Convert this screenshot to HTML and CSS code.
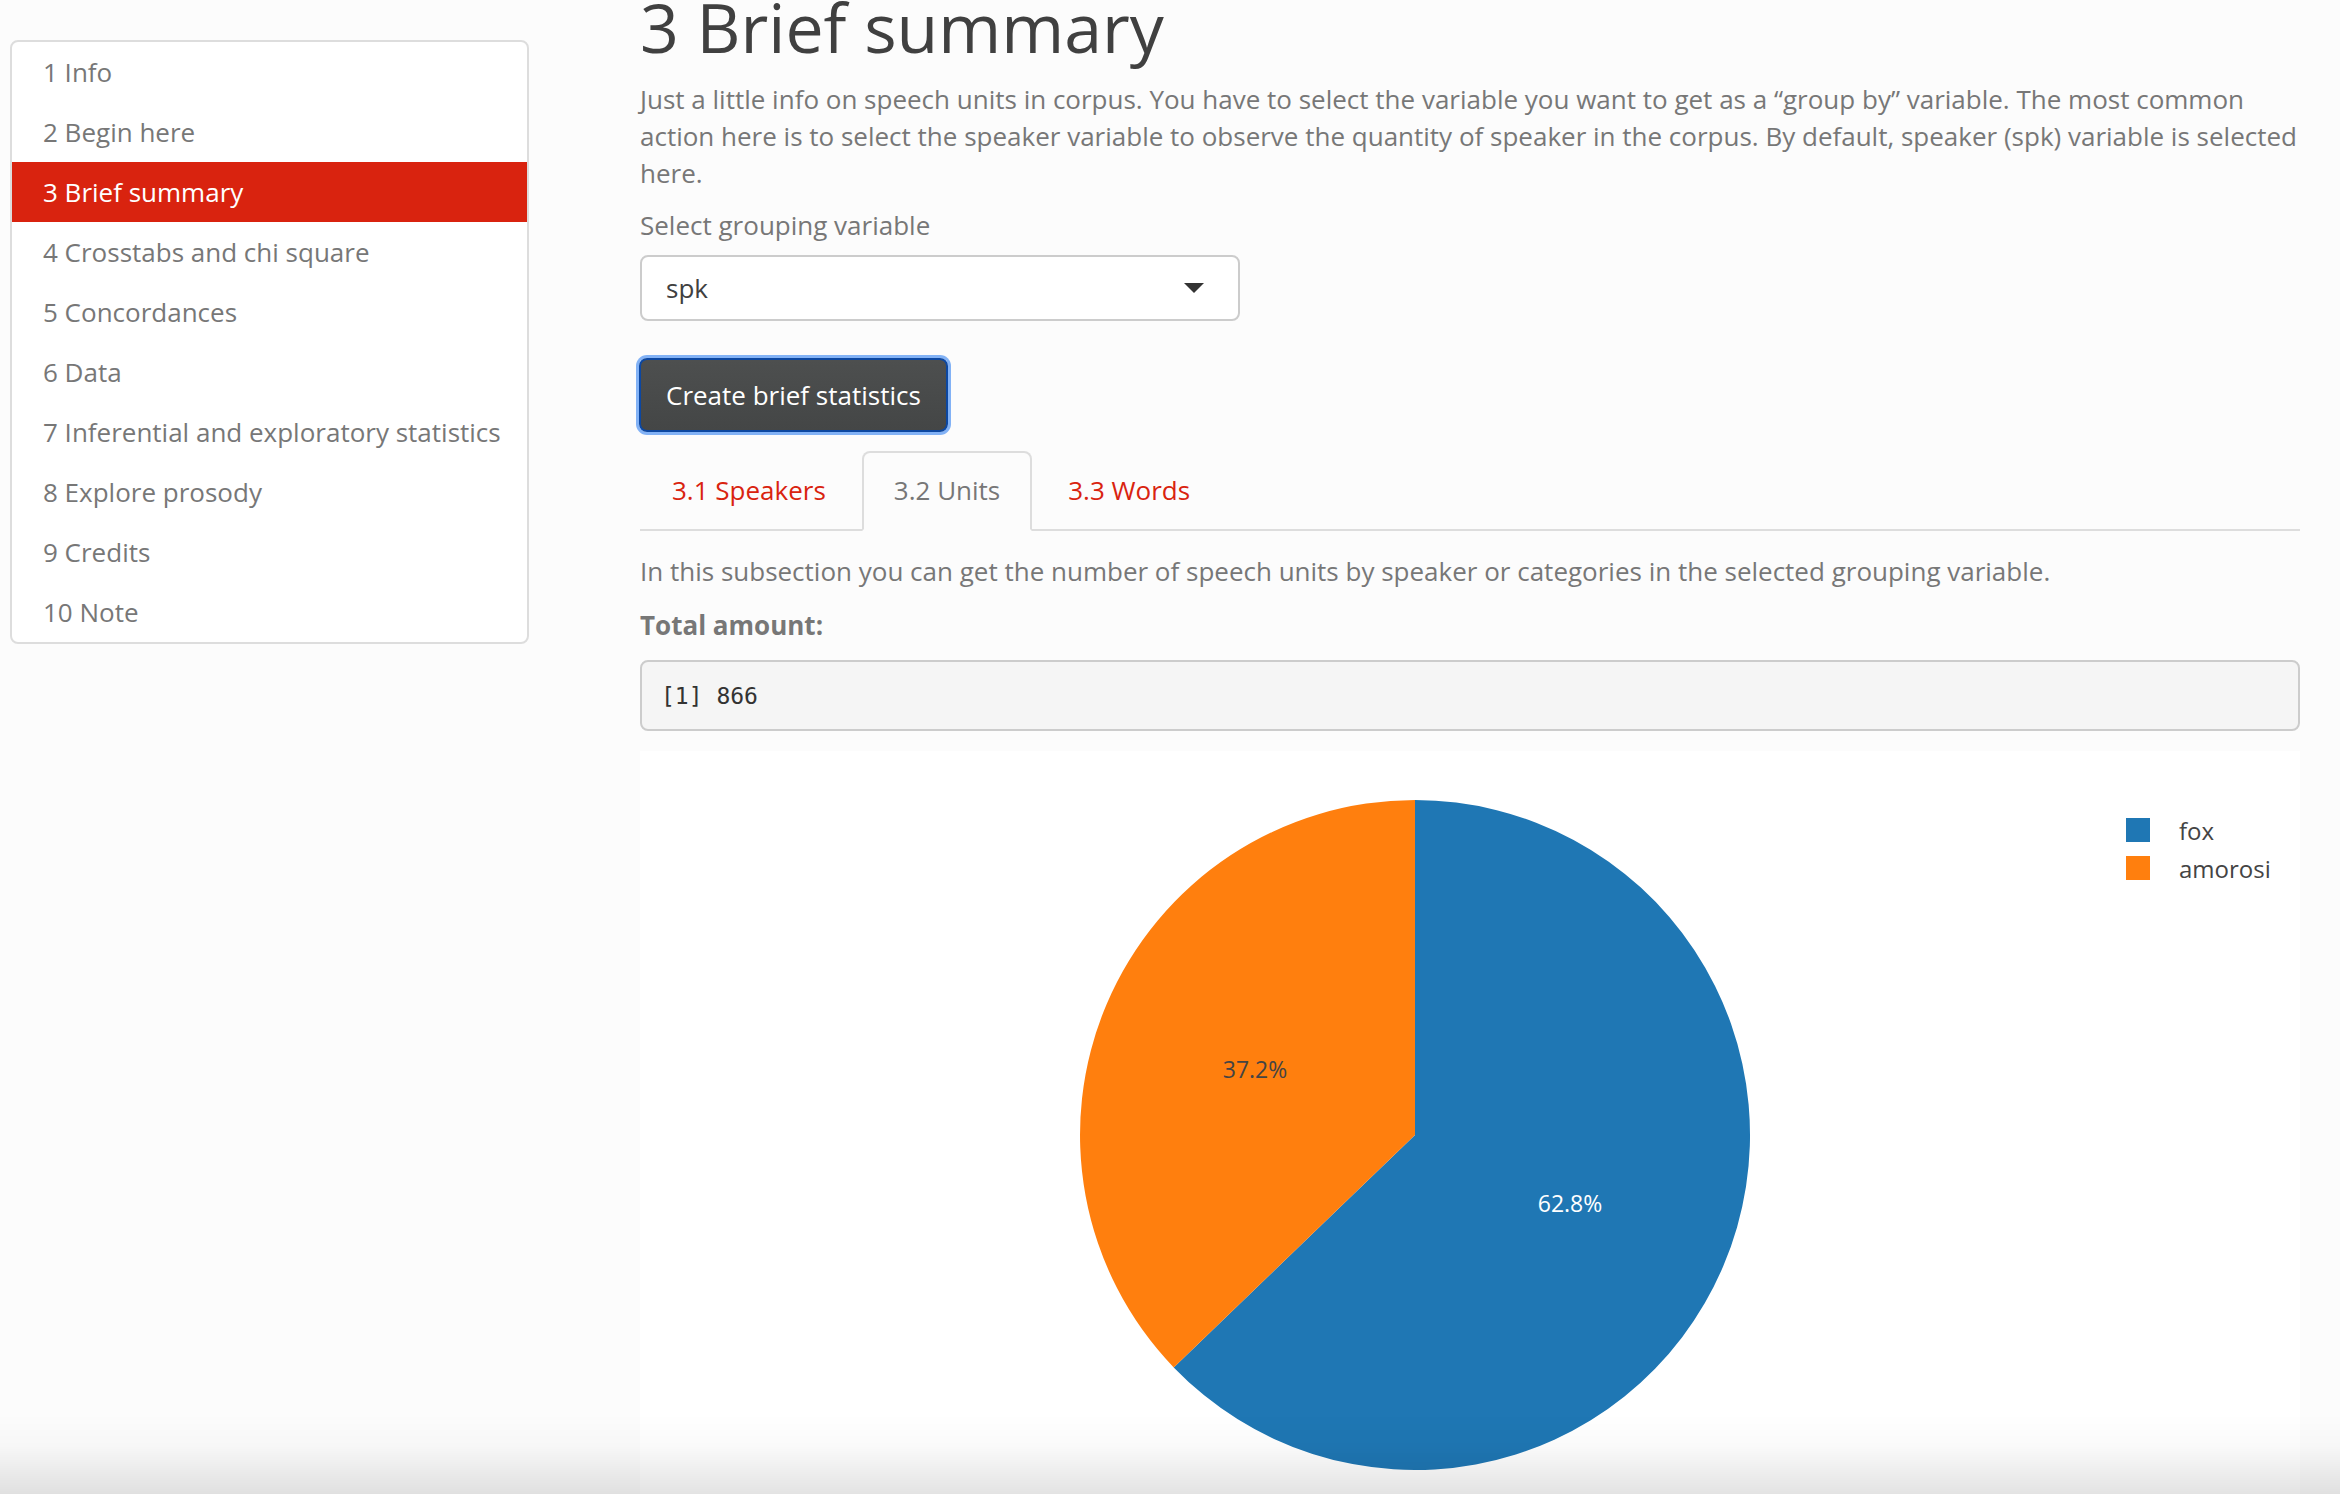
FILE: index.html
```html
<!DOCTYPE html>
<html lang="en">
<head>
<meta charset="utf-8">
<title>3 Brief summary</title>
<link rel="stylesheet" href="styles.css">
</head>
<body>
<div class="page">
  <nav class="sidebar">
    <ul class="navlist">
      <li class="nav-item">1 Info</li>
      <li class="nav-item">2 Begin here</li>
      <li class="nav-item active">3 Brief summary</li>
      <li class="nav-item">4 Crosstabs and chi square</li>
      <li class="nav-item">5 Concordances</li>
      <li class="nav-item">6 Data</li>
      <li class="nav-item">7 Inferential and exploratory statistics</li>
      <li class="nav-item">8 Explore prosody</li>
      <li class="nav-item">9 Credits</li>
      <li class="nav-item">10 Note</li>
    </ul>
  </nav>
  <main class="content">
    <h1 class="title">3 Brief summary</h1>
    <p class="intro">Just a little info on speech units in corpus. You have to select the variable you want to get as a “group by” variable. The most common action here is to select the speaker variable to observe the quantity of speaker in the corpus. By default, speaker (spk) variable is selected here.</p>
    <label class="field-label">Select grouping variable</label>
    <div class="select">
      <span class="select-value">spk</span>
      <span class="select-caret"></span>
    </div>
    <button class="btn">Create brief statistics</button>
    <ul class="tabs">
      <li class="tab"><a class="tab-link">3.1 Speakers</a></li>
      <li class="tab"><a class="tab-link active">3.2 Units</a></li>
      <li class="tab"><a class="tab-link">3.3 Words</a></li>
    </ul>
    <div class="tab-pane">
      <p class="sub">In this subsection you can get the number of speech units by speaker or categories in the selected grouping variable.</p>
      <p class="total"><strong>Total amount:</strong></p>
      <pre class="output">[1] 866</pre>
      <div class="plot">
        <svg class="pie" width="1660" height="800" viewBox="0 0 1660 800">
          <path d="M775,384 L775,49 A335,335 0 1 1 533.73,616.39 Z" fill="#1f77b4"/>
          <path d="M775,384 L533.73,616.39 A335,335 0 0 1 775,49 Z" fill="#ff7f0e"/>
          <text x="615" y="318" class="lbl dark">37.2%</text>
          <text x="930" y="452" class="lbl light">62.8%</text>
          <rect x="1486" y="67" width="24" height="24" fill="#1f77b4"/>
          <rect x="1486" y="105" width="24" height="24" fill="#ff7f0e"/>
          <text x="1539" y="79" class="leg">fox</text>
          <text x="1539" y="117" class="leg">amorosi</text>
        </svg>
      </div>
    </div>
  </main>
</div>
<div class="fade"></div>
</body>
</html>
```
FILE: styles.css
```css
html, body {
  margin: 0;
  padding: 0;
}
body {
  background: #fcfcfc;
  font-family: "Open Sans", "Liberation Sans", sans-serif;
  color: #777777;
  font-size: 26px;
  line-height: 37px;
  overflow: hidden;
  height: 1494px;
}
.page {
  display: flex;
  align-items: flex-start;
  padding-left: 10px;
}
.sidebar {
  width: 519px;
  flex: none;
  margin-top: 40px;
}
.navlist {
  list-style: none;
  margin: 0;
  padding: 0;
  background: #ffffff;
  border: 2px solid #dddddd;
  border-radius: 8px;
  overflow: hidden;
}
.nav-item {
  height: 60px;
  line-height: 60px;
  padding-left: 31px;
  color: #777777;
  white-space: nowrap;
}
.nav-item.active {
  background: #d9230f;
  color: #ffffff;
}
.content {
  margin-left: 111px;
  width: 1660px;
  flex: none;
}
.title {
  font-size: 68px;
  line-height: 54px;
  font-weight: 400;
  color: #404040;
  margin: 0;
}
.intro {
  margin: 27px -12px 15px 0;
}
.field-label {
  display: block;
  margin-bottom: 11px;
}
.select {
  box-sizing: border-box;
  width: 600px;
  height: 66px;
  background: #ffffff;
  border: 2px solid #cccccc;
  border-radius: 8px;
  display: flex;
  align-items: center;
  justify-content: space-between;
  padding: 0 34px 0 24px;
}
.select-value {
  color: #404040;
}
.select-caret {
  width: 0;
  height: 0;
  border-left: 10px solid transparent;
  border-right: 10px solid transparent;
  border-top: 10px solid #333333;
}
.btn {
  display: block;
  margin-top: 37px;
  box-sizing: border-box;
  height: 74px;
  padding: 0 25px;
  font-family: inherit;
  font-size: 26px;
  line-height: 37px;
  color: #ffffff;
  background: linear-gradient(#4d4f4f, #444646);
  border: 2px solid #0c47a1;
  border-radius: 8px;
  box-shadow: 0 0 0 3px #82b2f6;
  margin-left: -1px;
}
.tabs {
  list-style: none;
  margin: 19px 0 0 0;
  padding: 0;
  display: flex;
  border-bottom: 2px solid #dddddd;
}
.tab {
  margin-bottom: -2px;
  margin-right: 4px;
}
.tab-link {
  display: block;
  padding: 19px 30px 20px;
  line-height: 37px;
  border: 2px solid transparent;
  border-radius: 8px 8px 0 0;
  color: #d9230f;
}
.tab-link.active {
  color: #777777;
  background: #fcfcfc;
  border-color: #dddddd #dddddd transparent;
}
.sub {
  margin: 22px 0 17px;
}
.total {
  margin: 0 0 16px;
}
.output {
  margin: 0;
  box-sizing: border-box;
  height: 71px;
  padding: 19px 19px 0;
  font-family: "DejaVu Sans Mono", "Liberation Mono", monospace;
  font-size: 23px;
  line-height: 30px;
  color: #333333;
  background: #f5f5f5;
  border: 2px solid #cccccc;
  border-radius: 8px;
}
.plot {
  margin-top: 20px;
  background: #ffffff;
  height: 800px;
}
.pie {
  display: block;
}
.lbl {
  font-family: "Open Sans", sans-serif;
  font-size: 23px;
  text-anchor: middle;
  dominant-baseline: central;
}
.lbl.dark {
  fill: #444444;
}
.lbl.light {
  fill: #ffffff;
}
.leg {
  font-family: "Open Sans", sans-serif;
  font-size: 24px;
  fill: #444444;
  dominant-baseline: central;
}
.fade {
  position: fixed;
  left: 0;
  right: 0;
  bottom: 0;
  height: 80px;
  background: linear-gradient(rgba(0, 0, 0, 0), rgba(0, 0, 0, 0.02) 40%, rgba(0, 0, 0, 0.11));
  pointer-events: none;
}
```
